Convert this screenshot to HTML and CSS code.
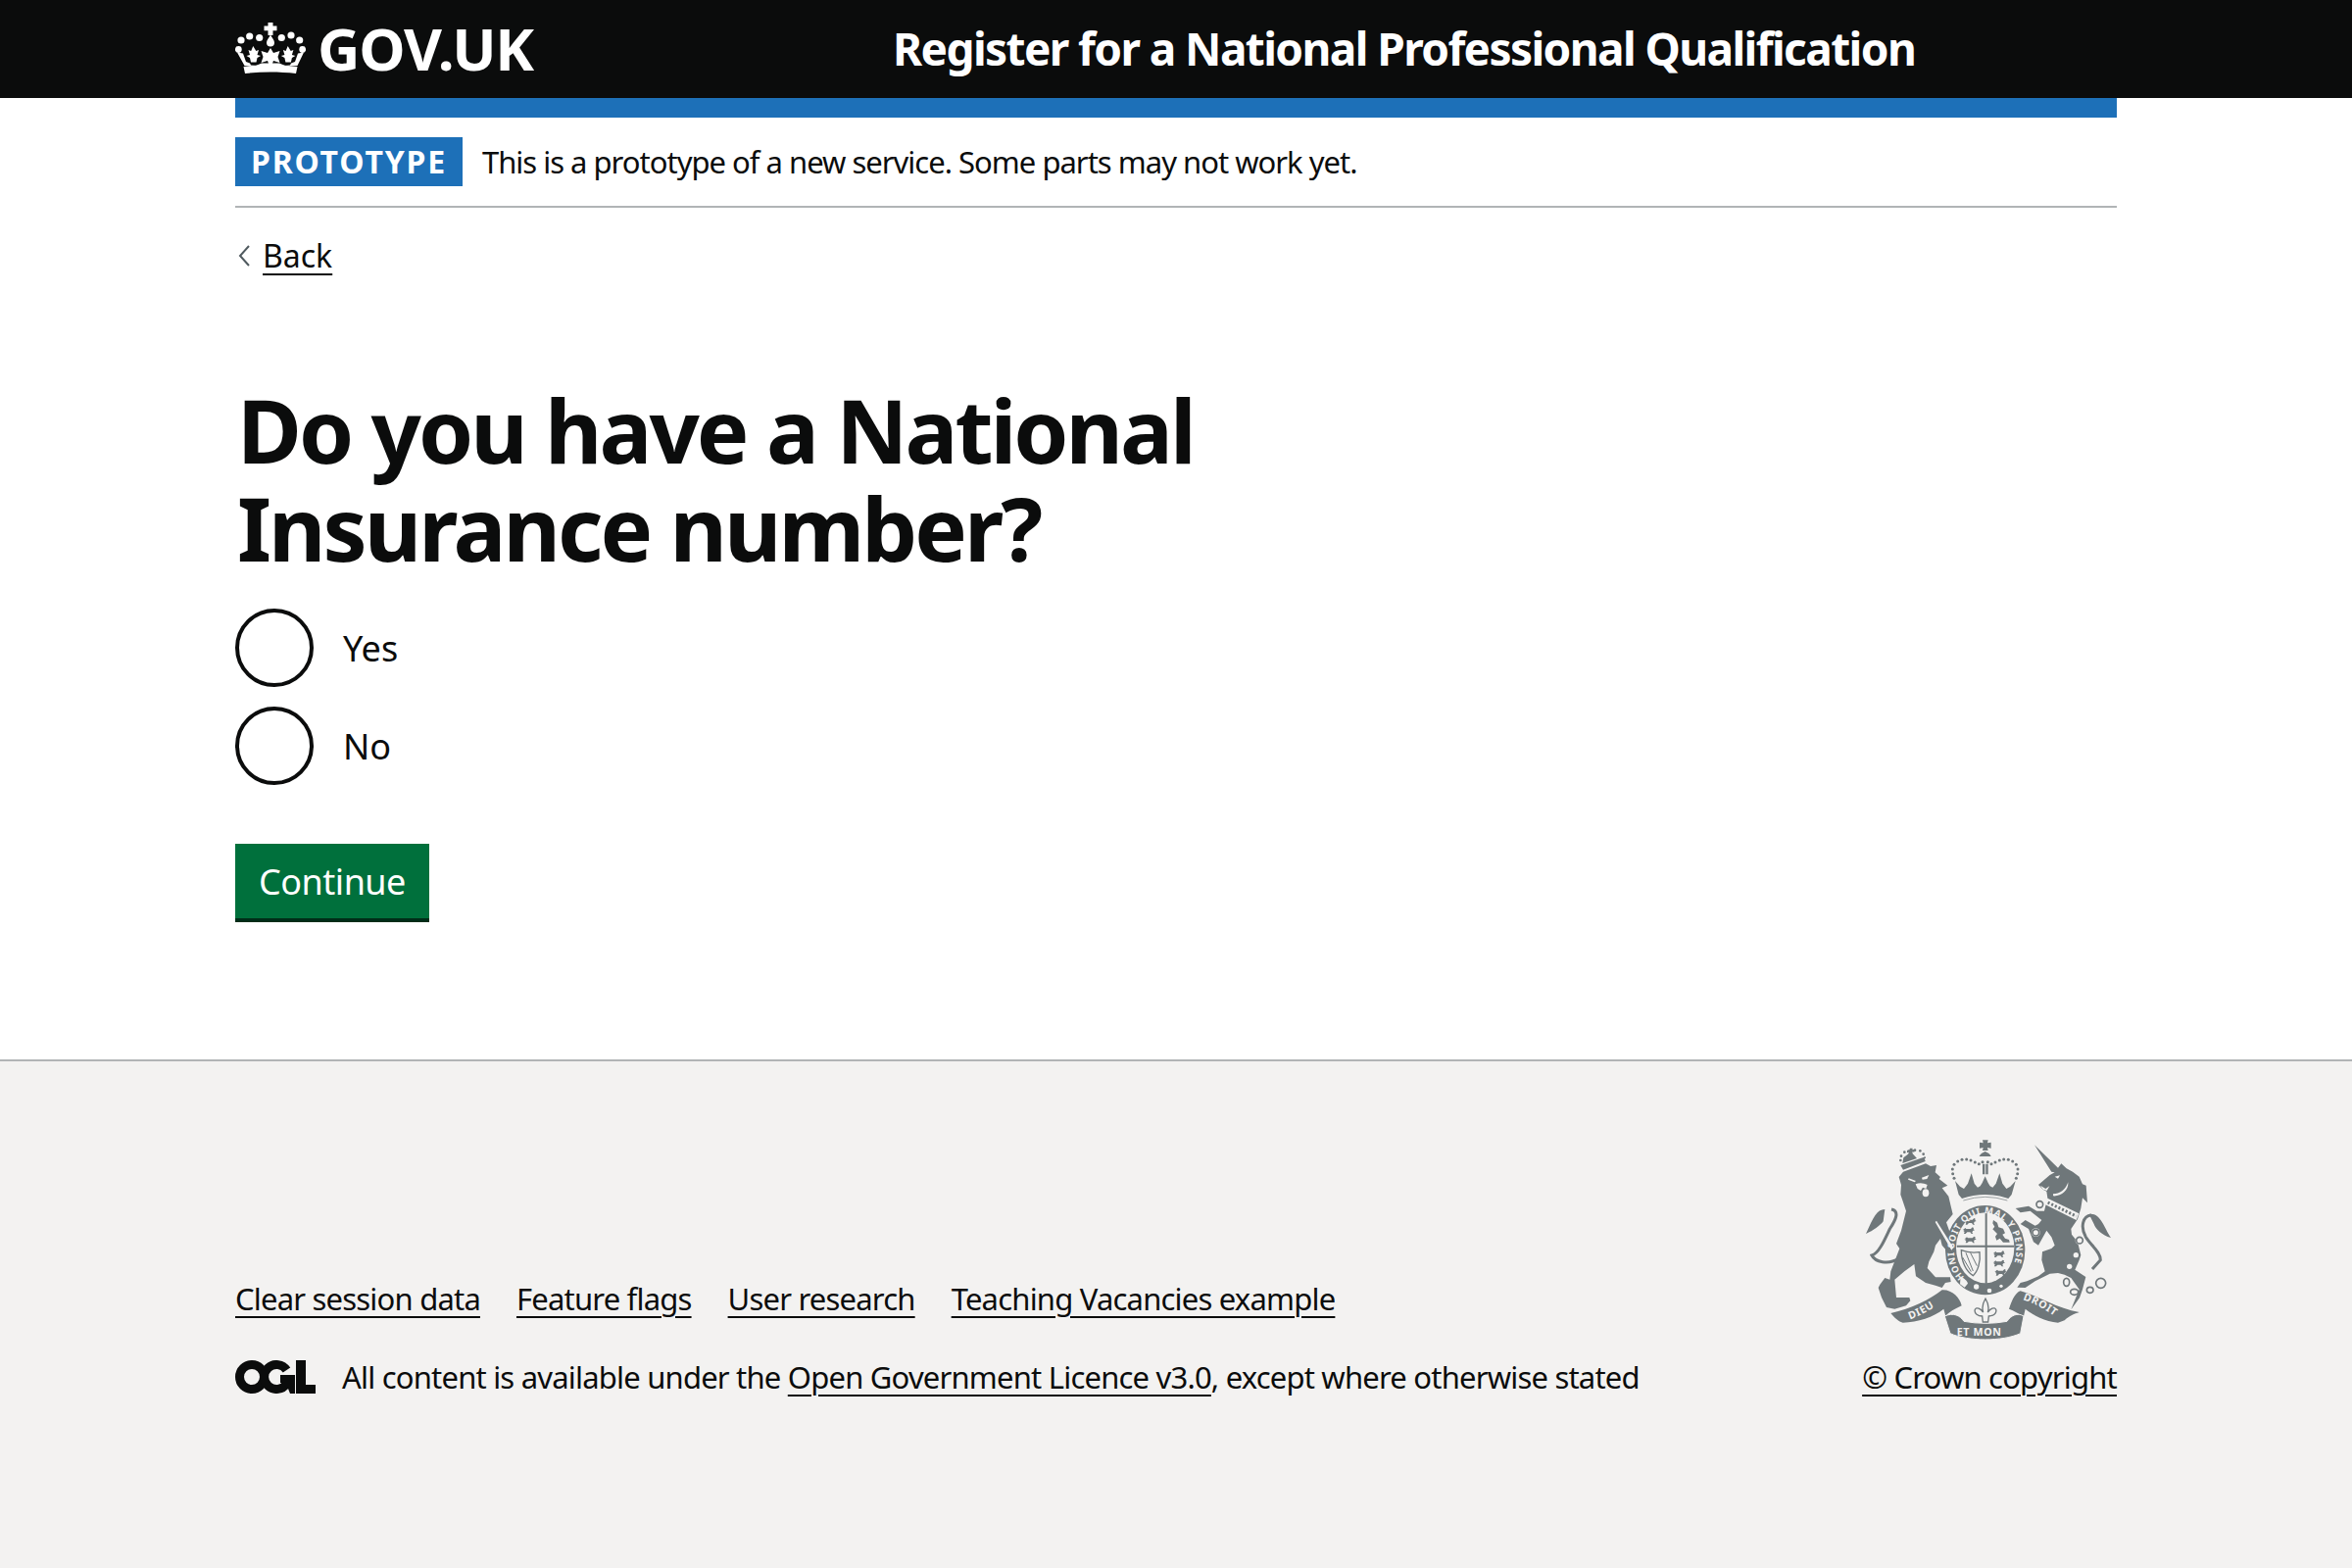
FILE: index.html
```html
<!DOCTYPE html>
<html lang="en">
<head>
<meta charset="utf-8">
<title>Do you have a National Insurance number?</title>
<link rel="stylesheet" href="styles.css">
</head>
<body>
<header class="header">
  <div class="header-inner">
    <a class="logo" href="#">
      <svg class="crown" viewBox="0 0 72 52" aria-hidden="true">
        <g fill="#fff">
          <circle cx="6" cy="18" r="3.6"/><circle cx="14.7" cy="14" r="3.6"/><circle cx="24.7" cy="15.5" r="3.6"/>
          <circle cx="47.3" cy="15.5" r="3.6"/><circle cx="57" cy="13" r="3.6"/><circle cx="65.7" cy="18" r="3.6"/>
          <circle cx="3.3" cy="27.5" r="3.4"/><circle cx="68.7" cy="27.5" r="3.4"/>
          <path d="M33.5 0h5v3.6h4v4.6h-4V13h-5V8.200h-4V3.600h4z"/>
          <path d="M36 12.500c2 3.500 4 5.500 4 8a4 4 0 0 1-8 0c0-2.500 2-4.500 4-8z"/>
          <path d="M18.300 24l3 5 2.700-1-1.500 5 3.500 1-3.500 2-1 4.500h-5.500l-1-4.500-3.500-2 3.500-1-1.500-5 2.700 1z"/>
          <path d="M36 26l3 5 6.500-2-2 6 2 6-6.500-2-1.500 4h-3L33 39l-6.500 2 2-6-2-6 6.500 2z"/>
          <path d="M53.700 24l3 5 2.700-1-1.500 5 3.500 1-3.500 2-1 4.500h-5.500l-1-4.500-3.500-2 3.500-1-1.500-5 2.700 1z"/>
          <path d="M2 30.500l6 1 3 8.500 4 1.500 1 2 5 .5 6-2.500h18l6 2.500 5-.5 1-2 4-1.500 3-8.500 6-1-6.500 13.500H9.500z"/>
          <path d="M8.500 45c18-2.500 37-2.500 55 0L62 52c-17-2-35-2-52 0z"/>
        </g>
      </svg>
      <span class="logotype">GOV.UK</span>
    </a>
    <a class="service" href="#">Register for a National Professional Qualification</a>
  </div>
</header>

<div class="container">
  <div class="blue-bar"></div>
  <div class="phase">
    <strong class="tag">PROTOTYPE</strong>
    <span class="phase-text">This is a prototype of a new service. Some parts may not work yet.</span>
  </div>
  <a class="back" href="#">
    <svg class="chevron" viewBox="0 0 12 22" aria-hidden="true"><path d="M11 1 2 11l9 10" fill="none" stroke="#505a5f" stroke-width="2"/></svg>
    <span class="link">Back</span>
  </a>
  <main class="main">
    <h1 class="heading">Do you have a National<br>Insurance number?</h1>
    <form class="form">
      <label class="radio"><input class="radio-input" type="radio" name="nino"><span class="radio-label">Yes</span></label>
      <label class="radio"><input class="radio-input" type="radio" name="nino"><span class="radio-label">No</span></label>
      <button class="button" type="button">Continue</button>
    </form>
  </main>
</div>

<footer class="footer">
  <div class="footer-inner">
    <div class="footer-left">
      <ul class="footer-links">
        <li><a class="link" href="#">Clear session data</a></li>
        <li><a class="link" href="#">Feature flags</a></li>
        <li><a class="link" href="#">User research</a></li>
        <li><a class="link" href="#">Teaching Vacancies example</a></li>
      </ul>
      <div class="licence">
        <svg class="ogl" viewBox="0 0 82 34" aria-hidden="true">
          <g fill="none" stroke="#0b0c0c" stroke-width="9">
            <circle cx="17" cy="17" r="12.500"/>
            <path d="M52.500 10A12.500 12.500 0 1 0 52.500 24"/>
          </g>
          <path fill="#0b0c0c" d="M46 15h15v19h-5l-2-5-4-3v-3h-4zM62 0h10v25h10v9H62z"/>
        </svg>
        <span>All content is available under the <a class="link" href="#">Open Government Licence v3.0</a>, except where otherwise stated</span>
      </div>
    </div>
    <div class="footer-right">
      <svg class="crest" viewBox="60 60 780 630" aria-hidden="true">
        <defs>
          <path id="pass" d="M0 7l6-5 3 3h14l5-5 4 2-1 4 4 3-6 2-2 5 3 4h-5l-4-5h-9l-5 5h-5l2-6-4-3 4-2-6-1z"/>
          <path id="garter" d="M373 493A95 112 0 1 1 501 493"/>
          <path id="dieu" d="M207 622Q262 602 310 562"/>
          <path id="droit" d="M552 562Q610 580 664 624"/>
        </defs>
        <g fill="#6f777a">
          <!-- royal crown -->
          <path d="M429 73h17l-2 9 11-2v18l-11-2 2 9h-17l2-9-11 2V80l11 2z"/>
          <path d="M437 108c8 4 16 8 18 15h-36c2-7 10-11 18-15z"/>
          <path d="M429 146h7v32h-7zM439 146h7v32h-7z"/>
          <g>
            <circle cx="338" cy="176" r="4.500"/><circle cx="337" cy="162" r="4.500"/><circle cx="342" cy="148" r="4.500"/><circle cx="353" cy="138" r="4.500"/><circle cx="366" cy="133" r="4.500"/><circle cx="380" cy="132" r="4.500"/><circle cx="393" cy="135" r="4.500"/><circle cx="406" cy="141" r="4.500"/><circle cx="418" cy="146" r="4.500"/><circle cx="429" cy="140" r="4.500"/>
            <circle cx="536" cy="176" r="4.500"/><circle cx="537" cy="162" r="4.500"/><circle cx="532" cy="148" r="4.500"/><circle cx="521" cy="138" r="4.500"/><circle cx="508" cy="133" r="4.500"/><circle cx="494" cy="132" r="4.500"/><circle cx="481" cy="135" r="4.500"/><circle cx="468" cy="141" r="4.500"/><circle cx="456" cy="146" r="4.500"/><circle cx="445" cy="140" r="4.500"/>
            <circle cx="342" cy="190" r="4.500"/><circle cx="532" cy="190" r="4.500"/>
          </g>
          <path d="M345 198L360 215L372 222L384 206L395 175L404 206L414 218L422 214L428 204L437 184L446 204L452 214L460 218L470 206L481 175L490 206L502 222L514 215L530 198L518 240L508 252Q437 228 366 252L356 240Z"/>
          <!-- lion crown -->
          <path d="M178 150L250 125L254 138L186 164Z"/>
          <path d="M207 98h8l-1 5 6-1v8l-6-1 1 6 13 14-44 15 3-17 14-11 3-6-6 2v-8l6 1z"/>
          <circle cx="178" cy="135" r="4"/><circle cx="180" cy="122" r="4"/><circle cx="190" cy="110" r="4"/><circle cx="203" cy="106" r="3"/><circle cx="222" cy="104" r="4"/><circle cx="238" cy="106" r="4"/><circle cx="248" cy="116" r="4"/><circle cx="252" cy="127" r="3"/>
          <!-- lion -->
          <path d="M173 186L186 170L255 145L270 153L288 150L284 172L300 186L296 192L322 212L305 220L325 245L332 275L338 300L318 325L345 400L342 425L322 415L305 395L300 375L285 395L280 415L265 445L260 465L285 493L330 493L332 507L315 510L305 525L285 518L255 510L225 490L220 453L190 475L160 500L165 555L205 555L208 565L195 580L160 590L135 585L120 555L110 525L115 515L130 495L145 500L148 475L175 405L165 390L180 350L195 290L185 260L178 240L180 210Z"/>
          <!-- lion tail -->
          <path d="M130 285C105 285 95 310 72 360C95 350 115 335 125 322Z"/>
          <!-- unicorn -->
          <path d="M588 88L660 158L670 145L686 160L705 170L725 185L735 208L746 212L750 265L735 250L730 282L720 315L700 345L702 362L720 385L730 425L725 440L712 470L745 492L735 530L726 556L700 592L712 562L725 530L700 495L680 485L660 480L635 482L590 505L560 525L535 524L545 510L565 505L600 490L620 475L610 440L612 415L640 405L650 395L640 370L625 350L600 395L585 385L570 345L545 330L560 318L590 335L600 330L610 318L575 290L545 295L530 282L570 275L595 290L618 290L628 250L625 230L615 225L600 210L635 180L650 172L640 170Z"/>
          <path d="M755 300C790 295 800 340 822 372C795 365 775 345 770 330Z"/>
          <!-- shield garter -->
          <ellipse cx="437" cy="410" rx="122" ry="137"/>
          <!-- ribbons -->
          <path d="M148 603C210 590 270 560 305 532C335 530 360 555 365 580C345 590 325 600 316 612L310 590C280 615 230 630 185 632C170 628 158 615 148 603Z"/>
          <path d="M510 590C520 560 530 540 545 535C600 550 660 590 725 600C710 605 695 610 680 625L660 632C620 628 585 610 560 590L555 612C540 605 525 595 510 590Z"/>
          <path class="ribbon-mid" d="M313 612C340 600 360 610 372 628Q437 640 504 628C516 610 536 600 555 612L545 665C490 690 385 690 330 665Z"/>
        </g>
        <g fill="none" stroke="#6f777a" stroke-width="9">
          <path d="M172 436C140 456 100 446 90 426C112 420 130 376 145 345C165 315 175 290 150 285"/>
          <path d="M762 303C735 305 728 340 745 370C760 395 790 415 790 440L765 468"/>
        </g>
        <!-- pale details -->
        <g fill="#f3f2f1">
          <path d="M203 190l22 8-4 4-20-8zM243 188l22-8-6 12-14 2z"/>
          <path d="M224 208c12-6 24-4 36 2l-4 12-10-4-6 10-10-6z"/>
          <ellipse cx="255" cy="235" rx="10" ry="12"/>
          <path d="M288 320l52 82-6 8-50-86z"/>
          <path d="M606 212l16 10 12-8-8 14-12-4zM650 185l16-4-6 10z"/>
          <path d="M645 238c20 0 38-12 46-36 2 26-22 44-46 42z"/>
          <path d="M625 250L724 298L716 318L620 270Z"/>
          <circle cx="604" cy="270" r="13"/><circle cx="726" cy="380" r="13"/><circle cx="592" cy="356" r="13"/>
          <circle cx="715" cy="425" r="8"/><circle cx="695" cy="460" r="8"/>
          <path d="M365 254Q437 230 509 254L504 268Q437 246 370 268Z"/>
          <ellipse cx="437" cy="403" rx="89" ry="108"/>
          <circle cx="410" cy="522" r="8"/><circle cx="450" cy="534" r="7"/><circle cx="486" cy="520" r="5"/>
          <path d="M362 490c10 8 20 12 22 22l-10 12-14-10z"/>
        </g>
        <g fill="none" stroke="#6f777a" stroke-width="5">
          <circle cx="604" cy="270" r="10"/><circle cx="726" cy="380" r="10"/><circle cx="592" cy="356" r="10"/>
          <ellipse cx="686" cy="508" rx="9" ry="12"/><ellipse cx="710" cy="538" rx="12" ry="9"/><ellipse cx="758" cy="532" rx="10" ry="9"/><circle cx="791" cy="511" r="15"/>
          <path d="M629 264L716 306" stroke-width="9" stroke-dasharray="6 6"/>
          <path d="M438 558C448 575 450 585 445 600C452 590 466 582 470 592C474 604 460 612 448 612L446 630H430L428 612C416 612 402 604 406 592C410 582 424 590 431 600C426 585 428 575 438 558Z" stroke-width="4"/>
          <path d="M440 296V512M350 398H526" stroke-width="6"/>
          <path d="M370 258Q437 236 505 258" stroke-width="2"/>
        </g>
        <!-- shield quarters -->
        <g fill="#6f777a">
          <use href="#pass" x="375" y="312"/><use href="#pass" x="370" y="340"/><use href="#pass" x="375" y="368"/>
          <path d="M462 318l12 8 4 14 14 4 6 14-8 4 8 12 12 4 2 8h-20l-10-12-10 6-4-12 6-8-14-14 6-8-6-10z"/>
          <use href="#pass" x="463" y="412"/><use href="#pass" x="463" y="440"/><use href="#pass" x="468" y="468"/>
        </g>
        <g fill="none" stroke="#6f777a">
          <path d="M364 410c14 6 40 8 56 6 4 30-6 60-20 72-22-14-36-44-36-78z" stroke-width="4"/>
          <path d="M378 418l22 56M392 418l20 40M368 432l26 44" stroke-width="3"/>
        </g>
        <g class="crest-text">
          <text class="crest-garter"><textPath href="#garter">HONI SOIT QUI MAL Y PENSE</textPath></text>
          <text class="crest-motto"><textPath href="#dieu">DIEU</textPath></text>
          <text class="crest-motto"><textPath href="#droit">DROIT</textPath></text>
          <text class="crest-motto" x="350" y="672">ET MON</text>
        </g>
      </svg>
      <a class="link copyright" href="#">© Crown copyright</a>
    </div>
  </div>
</footer>
</body>
</html>
```

FILE: styles.css
```css
* { box-sizing: border-box; }
html, body { margin: 0; padding: 0; }
body {
  min-height: 1600px;
  display: flex;
  flex-direction: column;
  font-family: "Noto Sans", "Liberation Sans", sans-serif;
  color: #0b0c0c;
  background: #fff;
}
a { color: inherit; text-decoration: none; }
.link {
  color: #0b0c0c;
  text-decoration: underline;
  text-decoration-thickness: 2px;
  text-underline-offset: 6px;
}
.header { background: #0b0c0c; height: 100px; color: #fff; }
.header-inner {
  width: 1920px;
  margin: 0 auto;
  height: 100%;
  padding-bottom: 3px;
  display: flex;
  align-items: center;
}
.logo { display: flex; align-items: center; gap: 12px; width: 671px; }
.crown { width: 72px; height: 52px; }
.logotype { font-size: 60px; font-weight: 700; line-height: 1; letter-spacing: -1.2px; }
.service { font-size: 46px; font-weight: 700; line-height: 1; white-space: nowrap; letter-spacing: -1.6px; }
.container { width: 1920px; margin: 0 auto; flex: none; }
.blue-bar { height: 20px; background: #1d70b8; }
.phase {
  display: flex;
  align-items: center;
  gap: 20px;
  padding: 20px 0;
  border-bottom: 2px solid #b1b4b6;
  height: 92px;
}
.tag {
  background: #1d70b8;
  color: #fff;
  font-size: 32px;
  letter-spacing: 1.8px;
  line-height: 50px;
  height: 50px;
  padding: 0 16px;
  font-weight: 700;
}
.phase-text { font-size: 31px; line-height: 50px; white-space: nowrap; letter-spacing: -1px; }
.back {
  display: inline-flex;
  align-items: center;
  gap: 13px;
  margin: 29px 0 0 3px;
  font-size: 32px;
  line-height: 40px;
}
.chevron { width: 12px; height: 22px; }
.main { padding-top: 107px; }
.heading {
  font-size: 90px;
  line-height: 100px;
  letter-spacing: -3px;
  font-weight: 700;
  margin: 0 0 33px 2px;
}
.form { display: flex; flex-direction: column; align-items: flex-start; }
.radio { display: flex; align-items: center; gap: 30px; margin-bottom: 20px; }
.radio-input {
  appearance: none;
  margin: 0;
  width: 80px;
  height: 80px;
  border: 4px solid #0b0c0c;
  border-radius: 50%;
  background: #fff;
}
.radio-label { font-size: 36px; line-height: 50px; padding-top: 2px; }
.button {
  margin-top: 40px;
  width: 198px;
  height: 80px;
  background: #00703c;
  color: #fff;
  border: 0;
  box-shadow: inset 0 -4px 0 #002d18;
  font-family: inherit;
  font-size: 36px;
  letter-spacing: -0.5px;
  line-height: 50px;
  padding: 0 0 2px;
}
.footer {
  margin-top: 140px;
  flex: 1;
  background: #f3f2f1;
  border-top: 2px solid #b1b4b6;
  padding-top: 76px;
}
.footer-inner {
  width: 1920px;
  margin: 0 auto;
  display: flex;
  justify-content: space-between;
  align-items: flex-end;
  font-size: 31px;
  letter-spacing: -0.8px;
  line-height: 40px;
}
.footer-links {
  list-style: none;
  margin: 0 0 40px;
  padding: 0;
  display: flex;
  gap: 37px;
}
.licence { display: flex; align-items: center; gap: 27px; white-space: nowrap; }
.ogl { width: 82px; height: 34px; }
.footer-right { display: flex; flex-direction: column; align-items: flex-end; gap: 16px; }
.crest { width: 260px; height: 210px; display: block; }
.ribbon-mid { stroke: #f3f2f1; stroke-width: 3; }
.crest-text { font-family: "Noto Sans", sans-serif; font-weight: 700; fill: #f3f2f1; }
.crest-garter { font-size: 28px; letter-spacing: 2.3px; }
.crest-motto { font-size: 32px; letter-spacing: 2px; }
```
